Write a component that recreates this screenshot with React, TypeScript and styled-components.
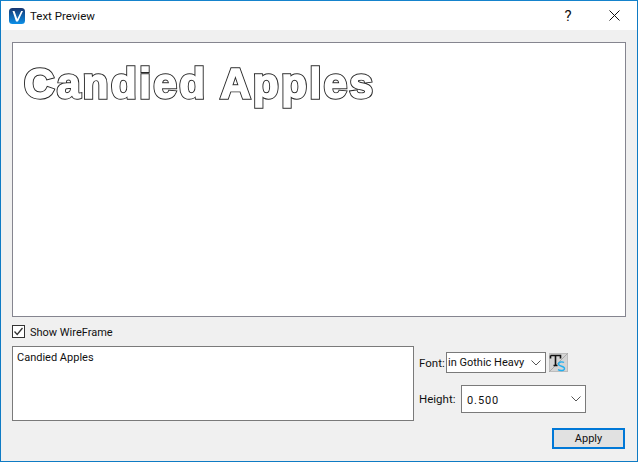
import React from "react";
import styled, { createGlobalStyle } from "styled-components";

const UI = `"Roboto", "Liberation Sans", sans-serif`;

const Global = createGlobalStyle`
  html, body { margin: 0; padding: 0; background: #f0f0f0; }
  body { font-family: ${UI}; }
`;

const Window = styled.div`
  width: 638px; height: 462px; box-sizing: border-box;
  border: 1px solid #0f7bc4; border-top-color: #1583cc;
  display: flex; flex-direction: column; background: #f0f0f0; overflow: hidden;
`;
const TitleBar = styled.div`
  height: 29px; flex: none; background: #fff; display: flex; align-items: center;
  padding-left: 8px;
`;
const Title = styled.span`
  margin-left: 5px; font-size: 11.5px; color: #111; flex: 1; line-height: 16px;
`;
const TitleButton = styled.button`
  width: 46px; height: 29px; border: 0; background: transparent; padding: 0; display: flex;
  align-items: center; justify-content: center; color: #111; font: 15px ${UI};
`;
const Content = styled.div`
  flex: 1; display: flex; flex-direction: column; padding: 12px 11px 11px 11px; min-height: 0;
`;
const Preview = styled.div`
  height: 275px; flex: none; box-sizing: border-box; background: #fff; border: 1px solid #85858f;
  padding: 16px 0 0 11px; overflow: hidden;
`;
const Outline = styled.div`
  position: relative; width: max-content; transform: translateZ(0);
  font-family: "Liberation Sans", sans-serif; font-weight: 700; font-size: 42px; line-height: 50px;
  letter-spacing: 2.55px; white-space: nowrap; color: #fff;
  -webkit-text-stroke: 3.4px #2a2a2a; paint-order: stroke fill;
  &::after {
    content: attr(data-text); position: absolute; left: 0; top: 0;
    -webkit-text-stroke: 1.5px #fff; color: #fff;
  }
`;
const CheckRow = styled.label`
  display: flex; align-items: center; height: 14px; margin-top: 7px; gap: 5px;
  font-size: 11px; color: #111;
`;
const CheckText = styled.span`
  padding-top: 2px;
`;
const Box = styled.span`
  width: 13px; height: 13px; box-sizing: border-box; border: 1px solid #333; background: #fff; display: block;
  flex: none;
`;
const Lower = styled.div`
  display: flex; margin-top: 8px; flex: none;
`;
const TextBox = styled.div`
  width: 402px; height: 75px; box-sizing: border-box; background: #fff; border: 1px solid #7a7a7a;
  padding: 3px 4px; font-size: 11px; line-height: 16px; color: #111; flex: none;
`;
const Side = styled.div`
  margin-left: 5px; display: flex; flex-direction: column; flex: 1;
`;
const FontRow = styled.div`
  display: flex; align-items: center; margin-top: 6px; height: 21px;
`;
const Label = styled.span<{ $w: number }>`
  width: ${p => p.$w}px; flex: none; font-size: 11.5px; color: #111; line-height: 16px;
`;
const Combo = styled.div<{ $w: number; $h: number; $pad: number }>`
  width: ${p => p.$w}px; height: ${p => p.$h}px; box-sizing: border-box;
  background: #fff; border: 1px solid #7a7a7a; display: flex; align-items: center; justify-content: space-between;
  padding: 0 4px 0 ${p => p.$pad}px; font-size: 11px; color: #111; flex: none; white-space: nowrap;
`;
const IconButton = styled.div`
  width: 19px; height: 19px; margin-left: 3px; background: #d4d4d4; flex: none;
`;
const HeightRow = styled.div`
  display: flex; align-items: center; margin-top: 12px; height: 28px;
`;
const Digits = styled.span`
  letter-spacing: 0.9px; padding-top: 2px;
`;
const Footer = styled.div`
  display: flex; justify-content: flex-end; margin-top: 15px; padding-right: 1px;
`;
const Apply = styled.button`
  width: 73px; height: 21px; box-sizing: border-box; border: 2px solid #0078d7; background: #e1e1e1;
  padding: 0; font: 11px ${UI}; color: #111;
`;

const Chevron = () => (
  <svg width="10" height="6" viewBox="0 0 10 6"><path d="M0.5 0.5 L5 5 L9.5 0.5" fill="none" stroke="#555" strokeWidth="1" /></svg>
);

export default function App() {
  return (
    <Window>
      <Global />
      <TitleBar>
        <svg width="16" height="16" viewBox="0 0 16 16">
          <defs>
            <linearGradient id="g" x1="0" y1="0" x2="0" y2="1">
              <stop offset="0" stopColor="#17356f" />
              <stop offset="1" stopColor="#0a8fe8" />
            </linearGradient>
          </defs>
          <rect width="16" height="16" rx="3.5" fill="url(#g)" />
          <path d="M3.5 3 L5.5 3 L8.3 11 L12.2 3 L14 3 L9 13.5 L7 13.5 Z" fill="#fff" />
        </svg>
        <Title>Text Preview</Title>
        <TitleButton>?</TitleButton>
        <TitleButton>
          <svg width="11" height="11" viewBox="0 0 11 11"><path d="M0.5 0.5 L10.5 10.5 M10.5 0.5 L0.5 10.5" stroke="#111" strokeWidth="1" fill="none" /></svg>
        </TitleButton>
      </TitleBar>
      <Content>
        <Preview><Outline data-text="Candied Apples">Candied Apples</Outline></Preview>
        <CheckRow>
          <Box>
            <svg width="11" height="11" viewBox="0 0 11 11"><path d="M1.5 5.5 L4.2 8.5 L9.5 2" fill="none" stroke="#333" strokeWidth="1.3" /></svg>
          </Box>
          <CheckText>Show WireFrame</CheckText>
        </CheckRow>
        <Lower>
          <TextBox>Candied Apples</TextBox>
          <Side>
            <FontRow>
              <Label $w={27}>Font:</Label>
              <Combo $w={100} $h={21} $pad={1}>in Gothic Heavy<Chevron /></Combo>
              <IconButton>
                <svg width="19" height="19" viewBox="0 0 19 19">
                  <rect x="0.5" y="0.5" width="18" height="18" fill="none" stroke="#bdbdbd" />
                  <path d="M0 19 L19 0" stroke="#aaa" strokeWidth="1" />
                  <path d="M1.5 2.5 H11.5 V5.5 M1.5 5.5 V2.5 M6.5 2.5 V12 M4.5 12.5 H8.5" fill="none" stroke="#111" strokeWidth="1.6" />
                  <path d="M15 9.5 C13.5 8.5 9.5 8.5 9.5 11 C9.5 13.8 15.5 12.7 15.5 15.5 C15.5 18 11 18 9 16.7" fill="none" stroke="#22b0f0" strokeWidth="1.4" />
                </svg>
              </IconButton>
            </FontRow>
            <HeightRow>
              <Label $w={42}>Height:</Label>
              <Combo $w={125} $h={28} $pad={5}><Digits>0.500</Digits><Chevron /></Combo>
            </HeightRow>
            <Footer><Apply>Apply</Apply></Footer>
          </Side>
        </Lower>
      </Content>
    </Window>
  );
}
